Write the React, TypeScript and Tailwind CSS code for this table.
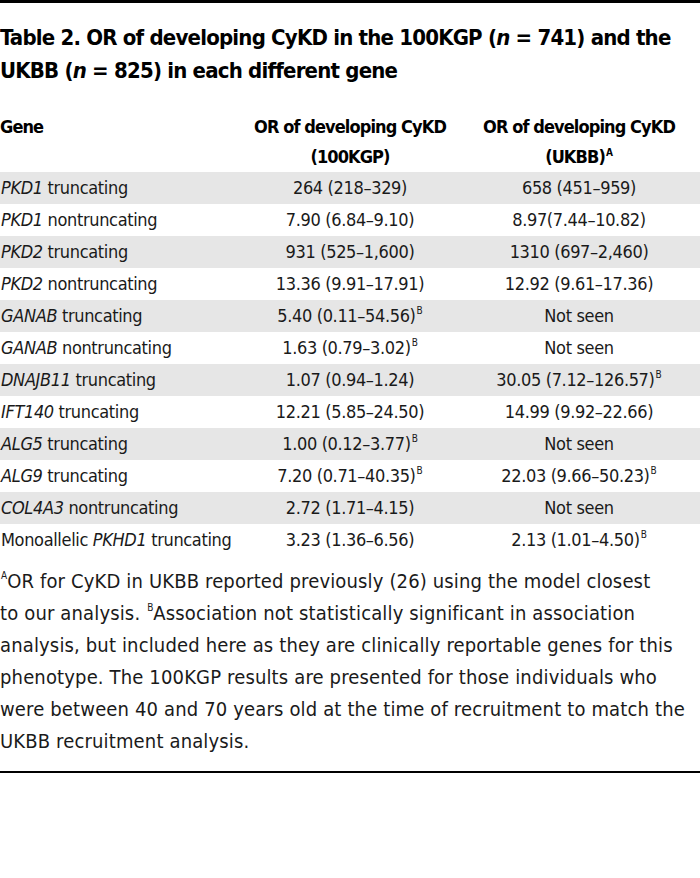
import React from "react";

type Row = { gene: React.ReactNode; a: React.ReactNode; b: React.ReactNode };

const Sup = ({ children }: { children: React.ReactNode }) => (
  <span className="inline-block align-top text-[10px] leading-none mt-[6px] ml-[1px] tracking-normal">{children}</span>
);

const rows: Row[] = [
  { gene: <><i>PKD1</i> truncating</>, a: "264 (218–329)", b: "658 (451–959)" },
  { gene: <><i>PKD1</i> nontruncating</>, a: "7.90 (6.84–9.10)", b: "8.97(7.44–10.82)" },
  { gene: <><i>PKD2</i> truncating</>, a: "931 (525–1,600)", b: "1310 (697–2,460)" },
  { gene: <><i>PKD2</i> nontruncating</>, a: "13.36 (9.91–17.91)", b: "12.92 (9.61–17.36)" },
  { gene: <><i>GANAB</i> truncating</>, a: <>5.40 (0.11–54.56)<Sup>B</Sup></>, b: "Not seen" },
  { gene: <><i>GANAB</i> nontruncating</>, a: <>1.63 (0.79–3.02)<Sup>B</Sup></>, b: "Not seen" },
  { gene: <><i>DNAJB11</i> truncating</>, a: "1.07 (0.94–1.24)", b: <>30.05 (7.12–126.57)<Sup>B</Sup></> },
  { gene: <><i>IFT140</i> truncating</>, a: "12.21 (5.85–24.50)", b: "14.99 (9.92–22.66)" },
  { gene: <><i>ALG5</i> truncating</>, a: <>1.00 (0.12–3.77)<Sup>B</Sup></>, b: "Not seen" },
  { gene: <><i>ALG9</i> truncating</>, a: <>7.20 (0.71–40.35)<Sup>B</Sup></>, b: <>22.03 (9.66–50.23)<Sup>B</Sup></> },
  { gene: <><i>COL4A3</i> nontruncating</>, a: "2.72 (1.71–4.15)", b: "Not seen" },
  { gene: <>Monoallelic <i>PKHD1</i> truncating</>, a: "3.23 (1.36–6.56)", b: <>2.13 (1.01–4.50)<Sup>B</Sup></> },
];

export default function App() {
  return (
    <div className="w-[700px] h-[878px] bg-white text-[#1a1a1a] font-['DejaVu_Sans_Condensed','DejaVu_Sans',sans-serif]">
      <div className="border-t-[3px] border-black pt-[18px]">
        <h1 className="text-[22px] leading-[33px] font-bold text-black tracking-[-0.8px] whitespace-nowrap">
          Table 2. OR of developing CyKD in the 100KGP (<i>n</i> = 741) and the
          <br />
          UKBB (<i>n</i> = 825) in each different gene
        </h1>
        <div className="grid grid-cols-[242px_216px_242px] mt-[25px] text-[18px] leading-[30px] font-bold text-black tracking-[-0.9px]">
          <div>Gene</div>
          <div className="text-center whitespace-nowrap">OR of developing CyKD<br />(100KGP)</div>
          <div className="text-center whitespace-nowrap">OR of developing CyKD<br />(UKBB)<Sup>A</Sup></div>
        </div>
        <div className="flex flex-col text-[18px] leading-[32px] tracking-[-0.35px]">
          {rows.map((r, i) => (
            <div key={i} className={`grid grid-cols-[242px_216px_242px] h-[32px] ${i % 2 === 0 ? "bg-[#e6e6e6]" : "bg-white"}`}>
              <div className="pl-[1px] whitespace-nowrap">{r.gene}</div>
              <div className="text-center whitespace-nowrap">{r.a}</div>
              <div className="text-center whitespace-nowrap">{r.b}</div>
            </div>
          ))}
        </div>
        <p className="mt-[9px] text-[20px] leading-[32px] tracking-[0.15px] whitespace-nowrap">
          <Sup>A</Sup>OR for CyKD in UKBB reported previously (26) using the model closest
          <br />
          to our analysis. <Sup>B</Sup>Association not statistically significant in association
          <br />
          analysis, but included here as they are clinically reportable genes for this
          <br />
          phenotype. The 100KGP results are presented for those individuals who
          <br />
          were between 40 and 70 years old at the time of recruitment to match the
          <br />
          UKBB recruitment analysis.
        </p>
        <div className="mt-[14px] border-t-2 border-black" />
      </div>
    </div>
  );
}
